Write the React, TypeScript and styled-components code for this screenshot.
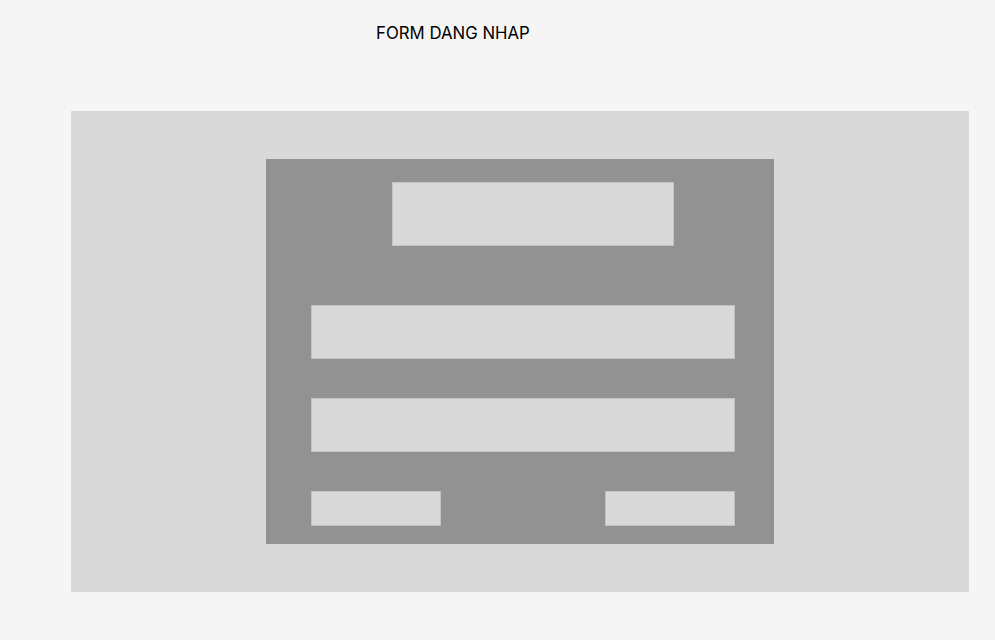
import styled, { createGlobalStyle } from "styled-components";

const GlobalStyle = createGlobalStyle`
  body {
    margin: 0;
    background: #f5f5f5;
    font-family: Inter, "Noto Sans", sans-serif;
  }
`;

const Page = styled.div`
  width: 995px;
  height: 640px;
  background: #f5f5f5;
  display: flex;
  flex-direction: column;
`;

const Title = styled.h1`
  margin: 0;
  padding: 24px 0 0 376px;
  height: 111px;
  box-sizing: border-box;
  font-size: 16.8px;
  font-weight: 400;
  line-height: 19px;
  color: #000;
`;

const Panel = styled.div`
  margin-left: 71px;
  width: 898px;
  height: 481px;
  background: #d9d9d9;
  display: flex;
  align-items: center;
  justify-content: center;
`;

const Form = styled.div`
  width: 508px;
  height: 385px;
  box-sizing: border-box;
  background: #929292;
  padding: 23px 39px 0 45px;
  display: flex;
  flex-direction: column;
`;

const Block = styled.div<{ $w: number; $h: number }>`
  width: ${(p) => p.$w}px;
  height: ${(p) => p.$h}px;
  box-sizing: border-box;
  background: #d9d9d9;
  border: 1px solid #c2c2c2;
`;

const Logo = styled(Block)`
  margin-left: 81px;
  margin-bottom: 59px;
`;

const Field = styled(Block)`
  margin-bottom: 39px;
`;

const Actions = styled.div`
  display: flex;
  justify-content: space-between;
`;

export default function App() {
  return (
    <>
      <GlobalStyle />
      <Page>
        <Title>FORM DANG NHAP</Title>
        <Panel>
          <Form>
            <Logo $w={282} $h={64} />
            <Field $w={424} $h={54} />
            <Field $w={424} $h={54} />
            <Actions>
              <Block $w={130} $h={35} />
              <Block $w={130} $h={35} />
            </Actions>
          </Form>
        </Panel>
      </Page>
    </>
  );
}
